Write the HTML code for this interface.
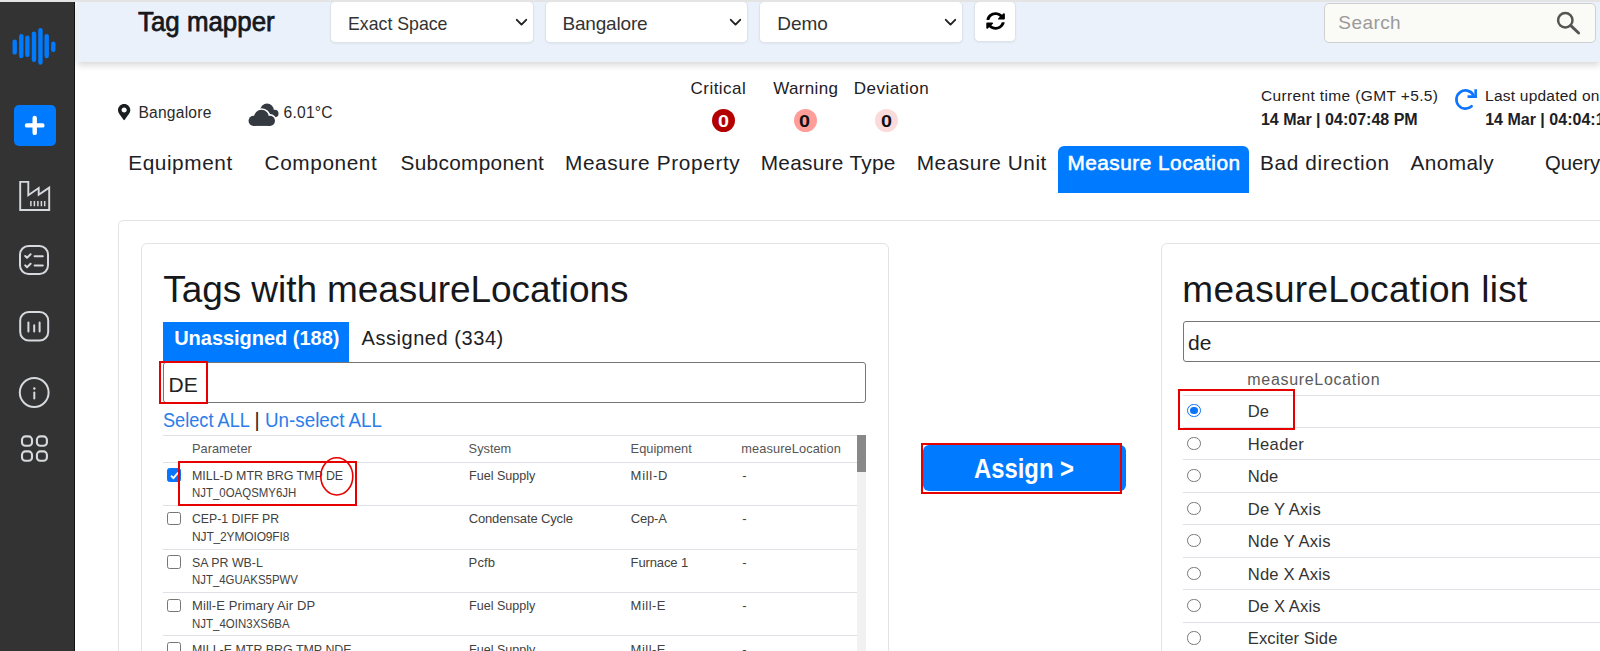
<!DOCTYPE html>
<html lang="en">
<head>
<meta charset="utf-8">
<title>Tag mapper</title>
<style>
*{box-sizing:border-box;margin:0;padding:0}
html,body{width:1600px;height:651px;overflow:hidden;background:#fff}
body{position:relative;font-family:"Liberation Sans",sans-serif}
.a{position:absolute}
.t{position:absolute;white-space:nowrap;line-height:1;font-family:"Liberation Sans",sans-serif}
.topstrip{left:0;top:0;width:1600px;height:2px;background:#e4e4e4;z-index:20}
.side{left:0;top:2px;width:75px;height:649px;background:#333;border-right:1px solid #111;z-index:10}
.hdr{left:77px;top:2px;width:1523px;height:59.6px;background:#eaf1fb;box-shadow:0 3px 7px rgba(0,0,0,.16)}
.sel{top:1px;height:42.2px;background:#fff;border:1px solid #dde3ec;border-radius:5px;box-shadow:0 1px 2px rgba(0,0,0,.05)}
.rbtn{left:974.3px;top:1px;width:42px;height:40.6px;background:#fff;border:1px solid #dde3ec;border-radius:5px;box-shadow:0 1px 2px rgba(0,0,0,.05)}
.search{left:1324.2px;top:2.8px;width:272.3px;height:40.7px;background:#fafaf6;border:1px solid #cfcfcf;border-radius:5px}
.plus{left:14px;top:105px;width:41.5px;height:40.5px;background:#007bff;border-radius:5px;z-index:11}
.tab{left:1057.5px;top:146.3px;width:191.5px;height:46.5px;background:#007bff;border-radius:6px 6px 0 0}
.card{border:1px solid #e3e3e3;border-radius:5px;background:#fff}
.badge{width:23px;height:23px;border-radius:50%;top:108.5px}
.subtab{left:163px;top:321.7px;width:186.3px;height:40.5px;background:#007bff}
.inp{background:#fff;border:1px solid #767676;border-radius:3px}
.hl{height:1px;background:#dee2e6}
.red{border:2.3px solid #e60000}
.cb{width:13.4px;height:13.4px;border:1.2px solid #767676;border-radius:2.5px;background:#fff;left:167.3px}
.rd{width:13.2px;height:13.2px;border:1.1px solid #767676;border-radius:50%;background:#fff;left:1187.4px}
.asg{left:923px;top:445px;width:203px;height:46px;background:#007bff;border-radius:6px}
svg{position:absolute;overflow:visible}
</style>
</head>
<body>
<div class="a topstrip"></div>

<!-- top header bar -->
<div class="a hdr"></div>
<div class="a sel" style="left:330px;width:203.5px"></div>
<div class="a sel" style="left:544.5px;width:203.5px"></div>
<div class="a sel" style="left:759px;width:204px"></div>
<div class="a rbtn"></div>
<div class="a search"></div>
<!-- select chevrons -->
<svg style="left:515.5px;top:18.5px" width="11" height="7" viewBox="0 0 11 7"><path d="M0.8 0.8 L5.5 5.6 L10.2 0.8" fill="none" stroke="#222" stroke-width="1.9" stroke-linecap="round" stroke-linejoin="round"/></svg>
<svg style="left:730px;top:18.5px" width="11" height="7" viewBox="0 0 11 7"><path d="M0.8 0.8 L5.5 5.6 L10.2 0.8" fill="none" stroke="#222" stroke-width="1.9" stroke-linecap="round" stroke-linejoin="round"/></svg>
<svg style="left:944.7px;top:18.5px" width="11" height="7" viewBox="0 0 11 7"><path d="M0.8 0.8 L5.5 5.6 L10.2 0.8" fill="none" stroke="#222" stroke-width="1.9" stroke-linecap="round" stroke-linejoin="round"/></svg>
<!-- header refresh (sync) icon -->
<svg style="left:986.3px;top:11.8px" width="19.2" height="18" viewBox="0 0 512 512" preserveAspectRatio="none"><path fill="#000" d="M370.72 133.28C339.458 104.008 298.888 87.962 255.848 88c-77.458.068-144.328 53.178-162.791 126.85-1.344 5.363-6.122 9.15-11.651 9.15H24.103c-7.498 0-13.194-6.807-11.807-14.176C33.933 94.924 134.813 8 256 8c66.448 0 126.791 26.136 171.315 68.685L463.030 40.97C478.149 25.851 504 36.559 504 57.941V192c0 13.255-10.745 24-24 24H345.941c-21.382 0-32.090-25.851-16.971-40.971l41.750-41.749zM32 296h134.059c21.382 0 32.090 25.851 16.971 40.971l-41.750 41.750c31.262 29.273 71.835 45.319 114.876 45.280 77.418-.07 144.315-53.144 162.787-126.849 1.344-5.363 6.122-9.150 11.651-9.150h57.304c7.498 0 13.194 6.807 11.807 14.176C478.067 417.076 377.187 504 256 504c-66.448 0-126.791-26.136-171.315-68.685L48.970 471.030C33.851 486.149 8 475.441 8 454.059V320c0-13.255 10.745-24 24-24z"/></svg>
<!-- search magnifier -->
<svg style="left:1555.8px;top:10.6px" width="25" height="24" viewBox="0 0 25 24"><circle cx="9.3" cy="9.3" r="7.2" fill="none" stroke="#555" stroke-width="2.5"/><path d="M14.6 14.4 L22.6 22" stroke="#555" stroke-width="2.9" stroke-linecap="round"/></svg>

<!-- sidebar -->
<div class="a side"></div>
<svg style="left:0;top:0;z-index:12" width="75" height="651" viewBox="0 0 75 651">
 <g stroke="#007bff" stroke-width="4.4" stroke-linecap="round">
  <path d="M14.7 41.6V52.4M21.3 36.3V56.1M27.4 37.7V54.7M34 33.6V59.8M40.45 30.1V62.6M46.7 36.1V56.1M53.3 43.7V49.7"/>
 </g>
 <!-- factory -->
 <g fill="none" stroke="#d6d9dd" stroke-width="1.9" stroke-linejoin="miter">
  <path d="M20.2 181.9H28.3V195.2L38.7 188V194.8L49.2 187.6V210H20.2Z"/>
  <path d="M30.9 201V206.2M34.4 201V206.2M37.9 201V206.2M41.4 201V206.2M44.7 201V206.2" stroke-width="1.5"/>
 </g>
 <!-- checklist -->
 <g fill="none" stroke="#d6d9dd" stroke-width="2" stroke-linecap="round" stroke-linejoin="round">
  <rect x="20" y="246" width="28" height="28" rx="8.5"/>
  <path d="M25.2 256L27 257.8L30.6 254.3M34.6 256.2H42.8M25.2 265.4L27 267.2L30.6 263.7M34.6 265.6H42.8"/>
 </g>
 <!-- bar chart -->
 <g fill="none" stroke="#d6d9dd" stroke-width="2" stroke-linecap="round">
  <rect x="20.2" y="312" width="28" height="28.5" rx="8.5"/>
  <path d="M28.4 322.4V331.4M34.2 325.2V331.4M39.6 322.4V331.4"/>
 </g>
 <!-- info -->
 <g fill="none" stroke="#d6d9dd" stroke-width="2" stroke-linecap="round">
  <circle cx="34.2" cy="392.5" r="14.4"/>
  <path d="M34.3 392.4V398.6"/>
 </g>
 <circle cx="34.3" cy="388.6" r="1.25" fill="#d6d9dd"/>
 <!-- grid -->
 <g fill="none" stroke="#d6d9dd" stroke-width="2.1">
  <rect x="22" y="436.4" width="10" height="9.4" rx="3.4"/>
  <rect x="36.9" y="436.4" width="10" height="9.4" rx="3.4"/>
  <rect x="22" y="451.4" width="10" height="9.4" rx="3.4"/>
  <rect x="36.9" y="451.4" width="10" height="9.4" rx="3.4"/>
 </g>
</svg>
<div class="a plus"></div>
<svg style="left:14px;top:105px;z-index:13" width="41.5" height="40.5" viewBox="0 0 41.5 40.5"><path d="M13 20.4H28.4M20.7 12.9V27.9" stroke="#fff" stroke-width="4.4" stroke-linecap="round"/></svg>

<!-- status row icons -->
<svg style="left:117.8px;top:104.2px" width="12.3" height="16.2" viewBox="0 0 384 512" preserveAspectRatio="none"><path fill="#1b1e21" d="M172.268 501.670C26.970 291.031 0 269.413 0 192 0 85.961 85.961 0 192 0s192 85.961 192 192c0 77.413-26.970 99.031-172.268 309.670-9.535 13.774-29.930 13.773-39.464 0zM192 272c44.183 0 80-35.817 80-80s-35.817-80-80-80-80 35.817-80 80 35.817 80 80 80z"/></svg>
<svg style="left:240px;top:95px" width="50" height="40" viewBox="0 0 814 651">
 <g fill="#343a40"><circle cx="440" cy="250" r="110"/><circle cx="565" cy="302" r="62"/><rect x="440" y="250" width="125" height="114"/></g>
 <g fill="#fff" stroke="#fff" stroke-width="52"><circle cx="222" cy="420" r="83"/><circle cx="487" cy="420" r="83"/><circle cx="350" cy="362" r="122"/><rect x="222" y="420" width="265" height="83"/></g>
 <g fill="#343a40"><circle cx="222" cy="420" r="83"/><circle cx="487" cy="420" r="83"/><circle cx="350" cy="362" r="122"/><rect x="222" y="420" width="265" height="83"/></g>
</svg>
<!-- badges -->
<div class="a badge" style="left:712px;background:#b30000"></div>
<div class="a badge" style="left:793.5px;background:#ff9d98"></div>
<div class="a badge" style="left:875px;background:#fbdadc"></div>
<!-- blue refresh -->
<svg style="left:1440px;top:80px" width="60" height="40" viewBox="0 0 976 651"><path d="M540.5 239.600A148 148 0 1 0 514 428" fill="none" stroke="#0d75ff" stroke-width="44" stroke-linecap="round"/><path d="M580 150V270H448" fill="none" stroke="#0d75ff" stroke-width="42"/></svg>

<!-- main tab -->
<div class="a tab"></div>

<!-- cards -->
<div class="a card" style="left:118px;top:220px;width:1600px;height:600px"></div>
<div class="a card" style="left:140.5px;top:243px;width:748px;height:600px;border-radius:6px"></div>
<div class="a card" style="left:1160.5px;top:243px;width:600px;height:600px;border-radius:6px"></div>

<!-- left panel -->
<div class="a subtab"></div>
<div class="a inp" style="left:162.6px;top:362px;width:703.4px;height:40.6px"></div>
<div class="a hl" style="left:163px;top:435px;width:694px"></div>
<div class="a hl" style="left:163px;top:461.5px;width:694px"></div>
<div class="a hl" style="left:163px;top:504.8px;width:694px"></div>
<div class="a hl" style="left:163px;top:548.5px;width:694px"></div>
<div class="a hl" style="left:163px;top:592px;width:694px"></div>
<div class="a hl" style="left:163px;top:635.4px;width:694px"></div>
<!-- scrollbar -->
<div class="a" style="left:857px;top:435px;width:9px;height:216px;background:#f1f1f1"></div>
<div class="a" style="left:857px;top:435px;width:9px;height:37px;background:#888"></div>
<!-- checkboxes -->
<div class="a cb" style="top:468px;left:167px;width:14px;height:14px;background:#0a74fa;border-color:#0a74fa"></div>
<svg style="left:167.5px;top:468.5px" width="13" height="13" viewBox="0 0 13 13"><path d="M3 6.700L5.400 9.100L10.100 3.700" fill="none" stroke="#fff" stroke-width="1.900"/></svg>
<div class="a cb" style="top:511.5px"></div>
<div class="a cb" style="top:555.2px"></div>
<div class="a cb" style="top:598.6px"></div>
<div class="a cb" style="top:642px"></div>

<!-- assign button -->
<div class="a asg"></div>

<!-- right panel -->
<div class="a inp" style="left:1183px;top:321.3px;width:500px;height:40.7px"></div>
<div class="a hl" style="left:1183px;top:394.6px;width:417px"></div>
<div class="a hl" style="left:1183px;top:426.9px;width:417px"></div>
<div class="a hl" style="left:1183px;top:459.4px;width:417px"></div>
<div class="a hl" style="left:1183px;top:491.8px;width:417px"></div>
<div class="a hl" style="left:1183px;top:524.3px;width:417px"></div>
<div class="a hl" style="left:1183px;top:556.8px;width:417px"></div>
<div class="a hl" style="left:1183px;top:589.2px;width:417px"></div>
<div class="a hl" style="left:1183px;top:621.7px;width:417px"></div>
<!-- radios -->
<div class="a rd" style="top:404.2px;border:1.4px solid #0a74fa"></div>
<div class="a" style="left:1190.2px;top:406.9px;width:7.6px;height:7.6px;border-radius:50%;background:#0a74fa"></div>
<div class="a rd" style="top:436.6px"></div>
<div class="a rd" style="top:469.1px"></div>
<div class="a rd" style="top:501.5px"></div>
<div class="a rd" style="top:534px"></div>
<div class="a rd" style="top:566.5px"></div>
<div class="a rd" style="top:598.9px"></div>
<div class="a rd" style="top:631.4px"></div>

<!-- text -->
<span class="t" style="left:138.37px;top:9.14px;font-size:27px;color:#16181b;transform:scaleX(0.9583);transform-origin:0 0;-webkit-text-stroke:0.75px #16181b;">Tag mapper</span>
<span class="t" style="left:347.94px;top:13.92px;font-size:19px;color:#333;transform:scaleX(0.9323);transform-origin:0 0;">Exact Space</span>
<span class="t" style="left:562.40px;top:13.92px;font-size:19px;color:#333;letter-spacing:-0.172px;">Bangalore</span>
<span class="t" style="left:777.20px;top:13.92px;font-size:19px;color:#333;letter-spacing:0.003px;">Demo</span>
<span class="t" style="left:1338.34px;top:13.42px;font-size:19px;color:#9a9a9a;letter-spacing:0.426px;">Search</span>
<span class="t" style="left:138.43px;top:105.19px;font-size:15.6px;color:#2a2a2a;letter-spacing:0.226px;">Bangalore</span>
<span class="t" style="left:283.48px;top:105.19px;font-size:15.6px;color:#2a2a2a;letter-spacing:0.261px;">6.01°C</span>
<span class="t" style="left:690.56px;top:79.86px;font-size:17px;color:#1d2024;letter-spacing:0.459px;">Critical</span>
<span class="t" style="left:773.36px;top:79.86px;font-size:17px;color:#1d2024;letter-spacing:0.302px;">Warning</span>
<span class="t" style="left:853.78px;top:79.86px;font-size:17px;color:#1d2024;letter-spacing:0.500px;">Deviation</span>
<span class="t" style="left:1260.91px;top:88.13px;font-size:15.5px;color:#1d2024;letter-spacing:0.369px;">Current time (GMT +5.5)</span>
<span class="t" style="left:1260.88px;top:111.96px;font-size:16px;color:#1d2024;font-weight:700;letter-spacing:0.014px;">14 Mar | 04:07:48 PM</span>
<span class="t" style="left:1485.04px;top:88.13px;font-size:15.5px;color:#1d2024;letter-spacing:0.229px;">Last updated on</span>
<span class="t" style="left:1485.13px;top:111.96px;font-size:16px;color:#1d2024;font-weight:700;letter-spacing:0.014px;">14 Mar | 04:04:15 PM</span>
<span class="t" style="left:128.19px;top:153.39px;font-size:20.8px;color:#1d2024;letter-spacing:0.571px;">Equipment</span>
<span class="t" style="left:264.60px;top:153.39px;font-size:20.8px;color:#1d2024;letter-spacing:0.582px;">Component</span>
<span class="t" style="left:400.50px;top:153.39px;font-size:20.8px;color:#1d2024;letter-spacing:0.309px;">Subcomponent</span>
<span class="t" style="left:564.94px;top:153.39px;font-size:20.8px;color:#1d2024;letter-spacing:0.635px;">Measure Property</span>
<span class="t" style="left:760.69px;top:153.39px;font-size:20.8px;color:#1d2024;letter-spacing:0.299px;">Measure Type</span>
<span class="t" style="left:916.69px;top:153.39px;font-size:20.8px;color:#1d2024;letter-spacing:0.542px;">Measure Unit</span>
<span class="t" style="left:1067.44px;top:153.39px;font-size:20.8px;color:#fff;letter-spacing:0.487px;-webkit-text-stroke:0.55px #fff;">Measure Location</span>
<span class="t" style="left:1259.94px;top:153.39px;font-size:20.8px;color:#1d2024;letter-spacing:0.651px;">Bad direction</span>
<span class="t" style="left:1410.54px;top:153.39px;font-size:20.8px;color:#1d2024;letter-spacing:0.383px;">Anomaly</span>
<span class="t" style="left:1545.39px;top:153.39px;font-size:20.8px;color:#1d2024;transform:scaleX(0.9743);transform-origin:0 0;">Query</span>
<span class="t" style="left:163.27px;top:270.88px;font-size:37px;color:#16181b;letter-spacing:-0.068px;">Tags with measureLocations</span>
<span class="t" style="left:174.16px;top:328.37px;font-size:20px;color:#fff;font-weight:700;letter-spacing:-0.021px;">Unassigned (188)</span>
<span class="t" style="left:361.54px;top:328.37px;font-size:20px;color:#1d2024;letter-spacing:0.551px;">Assigned (334)</span>
<span class="t" style="left:168.49px;top:373.82px;font-size:21px;color:#222;">DE</span>
<span class="t" style="left:163.26px;top:410.89px;font-size:19.5px;color:#2b7de9;transform:scaleX(0.9313);transform-origin:0 0;">Select ALL</span>
<span class="t" style="left:254.48px;top:410.89px;font-size:19.5px;color:#222;">|</span>
<span class="t" style="left:264.86px;top:410.89px;font-size:19.5px;color:#2b7de9;transform:scaleX(0.9640);transform-origin:0 0;">Un-select ALL</span>
<span class="t" style="left:192.02px;top:443.16px;font-size:12.8px;color:#555;">Parameter</span>
<span class="t" style="left:468.62px;top:443.16px;font-size:12.8px;color:#555;">System</span>
<span class="t" style="left:630.62px;top:443.16px;font-size:12.8px;color:#555;">Equipment</span>
<span class="t" style="left:741.34px;top:443.16px;font-size:12.8px;color:#555;letter-spacing:0.090px;">measureLocation</span>
<span class="t" style="left:192.03px;top:468.70px;font-size:13px;color:#424242;transform:scaleX(0.9539);transform-origin:0 0;">MILL-D MTR BRG TMP DE</span>
<span class="t" style="left:192.06px;top:487.44px;font-size:12px;color:#424242;transform:scaleX(0.9536);transform-origin:0 0;">NJT_0OAQSMY6JH</span>
<span class="t" style="left:468.62px;top:468.70px;font-size:13px;color:#424242;transform:scaleX(0.9659);transform-origin:0 0;">Fuel Supply</span>
<span class="t" style="left:630.61px;top:468.70px;font-size:13px;color:#424242;letter-spacing:0.720px;">Mill-D</span>
<span class="t" style="left:742.28px;top:468.70px;font-size:13px;color:#424242;">-</span>
<span class="t" style="left:192.06px;top:511.90px;font-size:13px;color:#424242;transform:scaleX(0.9413);transform-origin:0 0;">CEP-1 DIFF PR</span>
<span class="t" style="left:192.04px;top:530.64px;font-size:12px;color:#424242;letter-spacing:-0.156px;">NJT_2YMOIO9FI8</span>
<span class="t" style="left:468.64px;top:511.90px;font-size:13px;color:#424242;letter-spacing:-0.125px;">Condensate Cycle</span>
<span class="t" style="left:630.64px;top:511.90px;font-size:13px;color:#424242;letter-spacing:-0.123px;">Cep-A</span>
<span class="t" style="left:742.28px;top:511.90px;font-size:13px;color:#424242;">-</span>
<span class="t" style="left:192.03px;top:555.70px;font-size:13px;color:#424242;transform:scaleX(0.9522);transform-origin:0 0;">SA PR WB-L</span>
<span class="t" style="left:192.06px;top:574.44px;font-size:12px;color:#424242;transform:scaleX(0.9513);transform-origin:0 0;">NJT_4GUAKS5PWV</span>
<span class="t" style="left:468.61px;top:555.70px;font-size:13px;color:#424242;letter-spacing:0.147px;">Pcfb</span>
<span class="t" style="left:630.61px;top:555.70px;font-size:13px;color:#424242;letter-spacing:-0.128px;">Furnace 1</span>
<span class="t" style="left:742.28px;top:555.70px;font-size:13px;color:#424242;">-</span>
<span class="t" style="left:192.01px;top:599.10px;font-size:13px;color:#424242;letter-spacing:0.087px;">Mill-E Primary Air DP</span>
<span class="t" style="left:192.06px;top:617.84px;font-size:12px;color:#424242;transform:scaleX(0.9572);transform-origin:0 0;">NJT_4OIN3XS6BA</span>
<span class="t" style="left:468.62px;top:599.10px;font-size:13px;color:#424242;transform:scaleX(0.9659);transform-origin:0 0;">Fuel Supply</span>
<span class="t" style="left:630.61px;top:599.10px;font-size:13px;color:#424242;letter-spacing:0.473px;">Mill-E</span>
<span class="t" style="left:742.28px;top:599.10px;font-size:13px;color:#424242;">-</span>
<span class="t" style="left:192.03px;top:642.50px;font-size:13px;color:#424242;transform:scaleX(0.9551);transform-origin:0 0;">MILL-E MTR BRG TMP NDE</span>
<span class="t" style="left:468.62px;top:642.50px;font-size:13px;color:#424242;transform:scaleX(0.9659);transform-origin:0 0;">Fuel Supply</span>
<span class="t" style="left:630.61px;top:642.50px;font-size:13px;color:#424242;letter-spacing:0.473px;">Mill-E</span>
<span class="t" style="left:742.28px;top:642.50px;font-size:13px;color:#424242;">-</span>
<span class="t" style="left:1182.25px;top:270.88px;font-size:37px;color:#16181b;letter-spacing:0.305px;">measureLocation list</span>
<span class="t" style="left:1188.06px;top:332.02px;font-size:21px;color:#222;">de</span>
<span class="t" style="left:1247.29px;top:371.96px;font-size:16px;color:#5a5a5a;letter-spacing:0.684px;">measureLocation</span>
<span class="t" style="left:1247.80px;top:404.35px;font-size:16.6px;color:#333;">De</span>
<span class="t" style="left:1247.80px;top:436.65px;font-size:16.6px;color:#333;letter-spacing:0.305px;">Header</span>
<span class="t" style="left:1247.80px;top:469.15px;font-size:16.6px;color:#333;">Nde</span>
<span class="t" style="left:1247.80px;top:501.55px;font-size:16.6px;color:#333;letter-spacing:0.205px;">De Y Axis</span>
<span class="t" style="left:1247.80px;top:534.05px;font-size:16.6px;color:#333;letter-spacing:0.241px;">Nde Y Axis</span>
<span class="t" style="left:1247.80px;top:566.55px;font-size:16.6px;color:#333;letter-spacing:0.150px;">Nde X Axis</span>
<span class="t" style="left:1247.80px;top:598.95px;font-size:16.6px;color:#333;letter-spacing:0.094px;">De X Axis</span>
<span class="t" style="left:1247.80px;top:631.45px;font-size:16.6px;color:#333;letter-spacing:0.094px;">Exciter Side</span>
<span class="t" style="left:973.91px;top:454.90px;font-size:28px;color:#fff;font-weight:700;transform:scaleX(0.8511);transform-origin:0 0;">Assign &gt;</span>
<span class="t" style="left:717.79px;top:112.81px;font-size:17px;color:#fff;font-weight:700;transform:scaleX(1.16);transform-origin:0 0;">0</span>
<span class="t" style="left:799.29px;top:112.81px;font-size:17px;color:#111;font-weight:700;transform:scaleX(1.16);transform-origin:0 0;">0</span>
<span class="t" style="left:880.89px;top:112.81px;font-size:17px;color:#111;font-weight:700;transform:scaleX(1.16);transform-origin:0 0;">0</span>

<!-- red annotations -->
<div class="a red" style="left:159px;top:360.5px;width:48.8px;height:43px"></div>
<div class="a red" style="left:178px;top:460.5px;width:178.6px;height:45px"></div>
<svg style="left:0;top:0" width="1600" height="651"><ellipse cx="336.8" cy="476.4" rx="16" ry="18.6" fill="none" stroke="#e60000" stroke-width="1.6"/></svg>
<div class="a red" style="left:921px;top:443px;width:201.4px;height:50.5px"></div>
<div class="a red" style="left:1178.4px;top:389px;width:116.2px;height:41px"></div>
</body>
</html>
